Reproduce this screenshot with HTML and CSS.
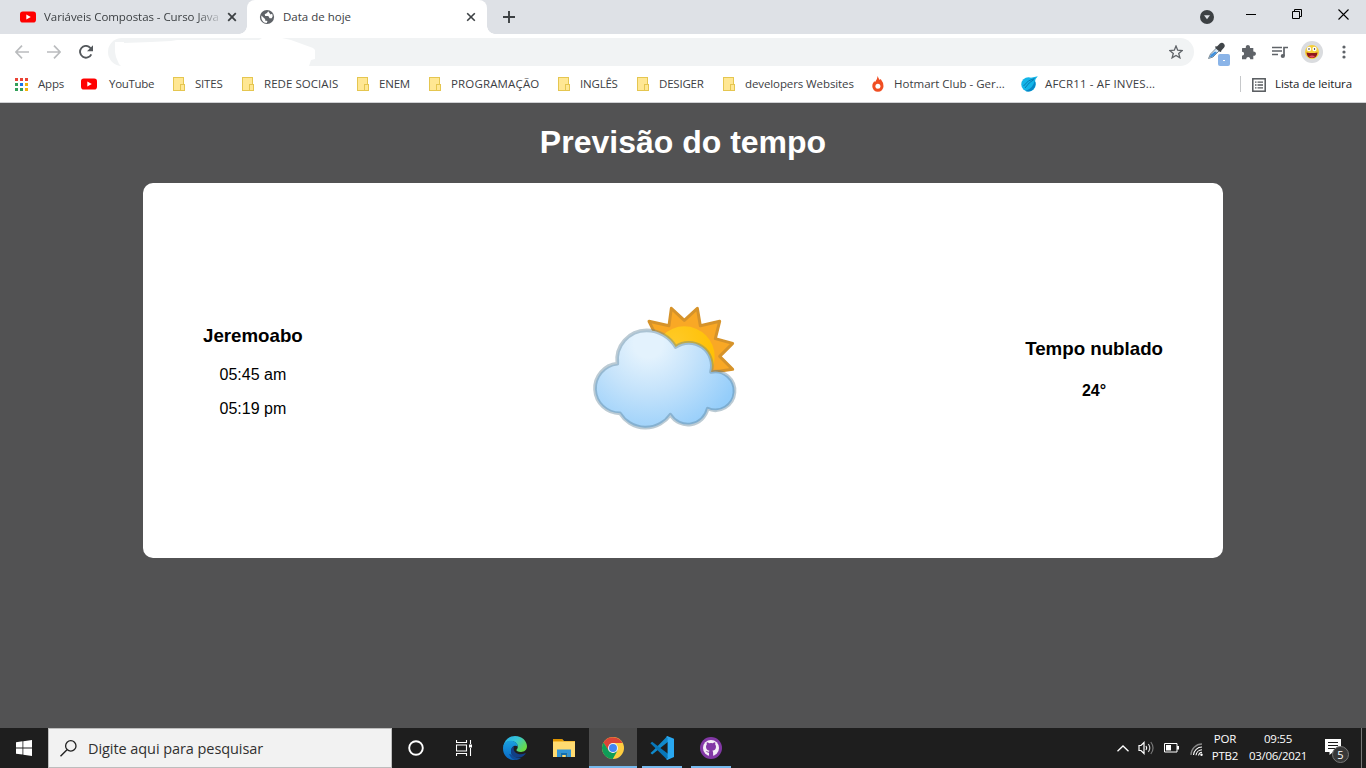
FILE: index.html
```html
<!DOCTYPE html>
<html lang="pt-BR">
<head>
<meta charset="utf-8">
<title>Data de hoje</title>
<link rel="stylesheet" href="styles.css">
</head>
<body>
<div class="screen">
  <header class="tabstrip">
    <div class="tab">
      <svg class="tab-icon" width="16" height="16" viewBox="0 0 16 16"><rect y="2.4" width="16" height="11.2" rx="2.8" fill="#f00"/><path d="M6.3 5.5v5L10.8 8z" fill="#fff"/></svg>
      <span class="tab-title faded">Variáveis Compostas - Curso Java</span>
      <svg class="tab-close" width="10" height="10" viewBox="0 0 10 10"><path d="M1.2 1.2l7.6 7.6M8.8 1.2L1.2 8.8" stroke="#3c4043" stroke-width="1.8"/></svg>
    </div>
    <div class="tab active">
      <svg class="tab-icon" width="16" height="16" viewBox="0 0 16 16"><circle cx="8" cy="8" r="7.1" fill="#5f6368"/><path d="M9.2 2.2 8 4 5.700 5.200 6.200 7H9.300L10.600 9.200H12.700L13.700 7.200 13.200 4.800 11.500 5.500 10.300 3.800ZM2.400 6.500 6.300 10.200 6 11.500 8.500 12.100 7.700 13.900C4.500 14.100 1.700 11.100 2.400 6.500Z" fill="#fff"/></svg>
      <span class="tab-title">Data de hoje</span>
      <svg class="tab-close" width="10" height="10" viewBox="0 0 10 10"><path d="M1.200 1.200l7.600 7.600M8.800 1.200L1.200 8.800" stroke="#3c4043" stroke-width="1.600"/></svg>
    </div>
    <svg class="new-tab" width="12" height="12" viewBox="0 0 12 12"><path d="M6 0v12M0 6h12" stroke="#3c4043" stroke-width="1.900"/></svg>
    <div class="window-controls">
      <svg width="14" height="14" viewBox="0 0 14 14" class="tab-search"><circle cx="7" cy="7" r="7" fill="#3c4043"/><path d="M4 5.300h6L7 9.200z" fill="#dee1e6"/></svg>
      <svg width="10" height="11" viewBox="0 0 10 11" class="min"><path d="M0 5.500h10" stroke="#000"/></svg>
      <svg width="10" height="10" viewBox="0 0 10 10" class="max"><path d="M.5 2.500h7v7h-7zM2.500 2.500v-2h7v7h-2" fill="none" stroke="#000"/></svg>
      <svg width="11" height="11" viewBox="0 0 11 11"><path d="M.5.500l10 10M10.500.500l-10 10" stroke="#000" stroke-width="1.100"/></svg>
    </div>
  </header>

  <nav class="toolbar">
    <div class="nav-buttons">
      <svg width="14" height="14" viewBox="0 0 14 14"><path d="M14 7H1M7 .7L.9 7 7 13.300" fill="none" stroke="#babcbe" stroke-width="1.700"/></svg>
      <svg width="14" height="14" viewBox="0 0 14 14"><path d="M0 7h13M7 .7L13.100 7 7 13.300" fill="none" stroke="#babcbe" stroke-width="1.700"/></svg>
      <svg width="14" height="14" viewBox="0 0 14 14"><path d="M12.300 9.300A5.900 5.900 0 1 1 11.300 2.800L12.300 3.800" fill="none" stroke="#54585c" stroke-width="1.900"/><path d="M14 .2v6H8z" fill="#54585c"/></svg>
    </div>
    <div class="omnibox">
      <svg class="blank-mark" width="202" height="28" viewBox="0 0 202 28"><path d="M1 4H10V5L37 4 57 3 63 2H145L148 0H168L177 2 188 6 199 10 201 12V21L197 22 195 28H7L5 26 2 19 1 14Z" fill="#fff"/></svg>
      <svg width="14" height="14" viewBox="0 0 14 14" class="star"><path d="M7 1l1.700 4.200 4.500.3-3.500 2.900 1.200 4.400L7 10.400l-3.900 2.400 1.200-4.400L.8 5.500l4.500-.3z" fill="none" stroke="#5f6368" stroke-width="1.300"/></svg>
    </div>
    <div class="extensions">
      <svg width="23" height="24" viewBox="0 0 23 24"><path d="M1.500 16.500l2-4.500 6-6 3 2.500-6.500 6.500z" fill="#d5e6f4" stroke="#7c8a94" stroke-width="1"/><path d="M2.500 15.500l1.500-3 4-3 2 1-4 4z" fill="#3f8fdc"/><path d="M8.500 4.500l5.500 5M9.500 6l3.500-3.500q2-1.500 3.300-.2t0 3L13 8.800z" stroke="#41464a" stroke-width="1.600" fill="#41464a"/><rect x="11" y="12" width="12" height="12" rx="2" fill="#8ab4e8"/><path d="M16 18.500h2" stroke="#fff"/></svg>
      <svg width="15" height="15" viewBox="0 0 15 15"><path d="M1.500 3h3.300c-.6-3.900 4.700-3.900 4.200 0h3.300v3.600c3.500-.2 3.500 4.400 0 4.200v3.500H9.200c0-3-4-3-4 0H1v-3.800c2.800 0 2.800-3.700 0-3.700V3.500z" fill="#5f6368"/></svg>
      <svg width="16" height="13" viewBox="0 0 16 13"><path d="M0 1.500h10M0 5h10M0 8.500h6M12 10V1.500h4" fill="none" stroke="#5f6368" stroke-width="1.700"/><circle cx="10.800" cy="10" r="2.100" fill="#5f6368"/></svg>
      <svg width="22" height="22" viewBox="0 0 22 22"><circle cx="11" cy="11" r="11" fill="#dadcdf"/><circle cx="11" cy="11" r="7" fill="#f6cf38"/><circle cx="8" cy="8" r="2.200" fill="#fff"/><circle cx="13.500" cy="8" r="2.200" fill="#fff"/><circle cx="8" cy="8" r=".7"/><circle cx="13.500" cy="8" r=".7"/><path d="M5.500 11.500q5.500 1 11 0Q16 17 11 17T5.500 11.500z" fill="#8e171b"/><path d="M8 15.500q3-2 6 0-3 2.300-6 0z" fill="#ec4c63"/></svg>
      <svg width="4" height="14" viewBox="0 0 4 14" fill="#5f6368"><circle cx="2" cy="2" r="1.600"/><circle cx="2" cy="7" r="1.600"/><circle cx="2" cy="12" r="1.600"/></svg>
    </div>
  </nav>

  <nav class="bookmarks">
    <div class="bm apps"><svg width="13" height="13" viewBox="0 0 13 13"><path d="M0 0h3v3H0zM5 0h3v3H5zM10 0h3v3h-3z" fill="#ea4335"/><path d="M0 5h3v3H0zM0 10h3v3H0zM5 10h3v3H5z" fill="#34a05a"/><path d="M5 5h3v3H5z" fill="#1a73e8"/><path d="M10 5h3v3h-3zM10 10h3v3h-3z" fill="#f5b30a"/></svg><span>Apps</span></div>
    <div class="bm yt"><svg width="16" height="16" viewBox="0 0 16 16"><rect y="2.400" width="16" height="11.200" rx="2.800" fill="#f00"/><path d="M6.300 5.500v5L10.800 8z" fill="#fff"/></svg><span>YouTube</span></div>
    <div class="bm"><i class="folder"></i><span>SITES</span></div>
    <div class="bm rede"><i class="folder"></i><span>REDE SOCIAIS</span></div>
    <div class="bm"><i class="folder"></i><span>ENEM</span></div>
    <div class="bm prog"><i class="folder"></i><span>PROGRAMAÇÃO</span></div>
    <div class="bm"><i class="folder"></i><span>INGLÊS</span></div>
    <div class="bm"><i class="folder"></i><span>DESIGER</span></div>
    <div class="bm dev"><i class="folder"></i><span>developers Websites</span></div>
    <div class="bm hot"><svg width="12" height="16" viewBox="0 0 12 16"><path d="M5.700 0q.7 2.500 2 4l1-1Q11.500 6.500 11.500 10.200A5.600 5.600 0 0 1 .3 10.200Q.3 7.500 2.200 5.200l.9.900Q5.200 3.800 5.700 0z" fill="#f04e23"/><circle cx="5.900" cy="10.200" r="2.500" fill="#fff"/></svg><span>Hotmart Club - Ger...</span></div>
    <div class="bm af"><svg width="17" height="16" viewBox="0 0 17 16"><circle cx="7.500" cy="8.400" r="7.200" fill="#13b5e8"/><path d="M10 1.800L16.800.3Q14 3 13.800 6z" fill="#13b5e8"/><path d="M13.800 4.500q2.300 5.500-2.300 9.500-3.500 2.500-7 1Q12 12.500 13.800 4.500z" fill="#0786c5"/><path d="M2.500 10q4.500-6.500 11-7.500M4 12q4-6 9-8.500" fill="none" stroke="#0873aa" stroke-width=".9"/></svg><span>AFCR11 - AF INVES...</span></div>
    <div class="bm reading"><svg width="14" height="14" viewBox="0 0 14 14"><rect x=".8" y=".8" width="12.400" height="12.400" fill="none" stroke="#54585c" stroke-width="1.500"/><path d="M3 4.200h1.500M3 7h1.500M3 9.800h1.500M5.500 4.200H11M5.500 7H11M5.500 9.800H11" stroke="#54585c" stroke-width="1.300"/></svg><span>Lista de leitura</span></div>
  </nav>

  <main class="page">
    <h1>Previsão do tempo</h1>
    <section class="card">
      <div class="place"><h3>Jeremoabo</h3><p>05:45 am</p><p>05:19 pm</p></div>
      <svg class="weather" width="170" height="145" viewBox="0 0 510 435">
        <defs>
          <radialGradient id="sun" gradientUnits="userSpaceOnUse" cx="283" cy="142" r="110"><stop offset="0" stop-color="#ffca28"/><stop offset="1" stop-color="#ffc107"/></radialGradient>
          <radialGradient id="cloud" gradientUnits="userSpaceOnUse" cx="205" cy="145" r="290"><stop offset=".15" stop-color="#e3f2fd"/><stop offset=".5" stop-color="#c5e3fb"/><stop offset="1" stop-color="#94cdfa"/></radialGradient>
        </defs>
        <path d="M207 79L267 92 274 40 313 76 352 40 361 92 419 79 406 131 458 145 419 184 458 223 395 232 240 145Z" fill="#f9a825"/>
        <circle cx="313" cy="185" r="91" fill="url(#sun)"/>
        <path d="M240 145L207 79 267 92 274 40 313 76 352 40 361 92 419 79 406 131 458 145 419 184 458 223 395 232" fill="none" stroke="#d6932a" stroke-width="9" stroke-linejoin="round"/>
        <path d="M112 206A88.500 88.500 0 0 1 200 106A100.700 100.700 0 0 1 287 156A69 69 0 0 1 393 231A58 58 0 1 1 383 341A61 61 0 0 1 271 359A90 90 0 0 1 120 355A74.700 74.700 0 0 1 112 206Z" fill="url(#cloud)"/>
        <path d="M112 206A88.500 88.500 0 0 1 200 106A100.700 100.700 0 0 1 287 156A69 69 0 0 1 393 231A58 58 0 1 1 383 341A61 61 0 0 1 271 359A90 90 0 0 1 120 355A74.700 74.700 0 0 1 112 206Z" fill="none" stroke="#587c94" stroke-opacity=".4" stroke-width="11" stroke-linejoin="round"/>
      </svg>
      <div class="status"><h3>Tempo nublado</h3><strong>24°</strong></div>
    </section>
  </main>

  <footer class="taskbar">
    <div class="start"><svg width="16" height="16" viewBox="0 0 16 16" fill="#fff"><path d="M0 2.300L6.500 1.300V7.500H0zM7.300 1.200L16 0V7.500H7.300zM0 8.400H6.500V14.600L0 13.700zM7.300 8.400H16V16L7.300 14.700z"/></svg></div>
    <div class="search"><svg width="17" height="17" viewBox="0 0 17 17"><circle cx="10.800" cy="5.900" r="5.200" fill="none" stroke="#222" stroke-width="1.300"/><path d="M7 9.700L.5 16.200" stroke="#222" stroke-width="1.400"/></svg><span>Digite aqui para pesquisar</span></div>
    <div class="task-icons">
      <div class="task"><svg width="16" height="16" viewBox="0 0 16 16"><circle cx="8" cy="8" r="6.800" fill="none" stroke="#fff" stroke-width="1.900"/></svg></div>
      <div class="task"><svg width="17" height="16" viewBox="0 0 17 16"><path d="M.5 0v2.500h10V0M.5 16v-2.500h10V16M.5 5h10v6H.500zM14.500 0v4M14.500 8v8" fill="none" stroke="#fff" stroke-width="1.100"/><rect x="13" y="4.500" width="3" height="3" fill="#fff"/></svg></div>
      <div class="task edge"><svg width="24" height="24" viewBox="0 0 24 24"><defs><linearGradient id="e1" x1="0" y1="0" x2="1" y2=".6"><stop offset="0" stop-color="#26a9e8"/><stop offset=".5" stop-color="#36c5d8"/><stop offset="1" stop-color="#68db45"/></linearGradient><linearGradient id="e2" x1="0" y1="0" x2="0" y2="1"><stop offset="0" stop-color="#1aa0e0"/><stop offset="1" stop-color="#0967c3"/></linearGradient></defs><path d="M.3 10.500C1.500 3.500 6.500 0 12 0c7.500 0 12 5.500 12 10.300 0 3.700-3 5.700-6 5.700-3.200 0-4.600-1-4.600-1.900 0-.8 1.400-1.300 1.400-3.400C14.800 7.500 11.500 4.500 7 5 3.500 5.500 1 8 .3 10.500z" fill="url(#e1)"/><path d="M.1 11C.5 7 4 4.800 7.500 4.800c4.200 0 7.300 2.700 7.300 5.800C12 8.500 8.500 10.500 8.200 14.500 8 19 11 22.500 15 23.500 7 26-.8 20 .1 11z" fill="url(#e2)"/><path d="M11.500 9.500C8.500 11 7 14.500 8.700 18c2.300 5 9.300 5.200 13.800 0 .5-.6 0-1-.6-.7-5.500 2.600-11.900-.5-11.200-5.600.1-.9.400-1.600.8-2.200z" fill="#123f86"/><path d="M9 18.500q3.500 4.500 9.500 3.200-3 2.300-6.500 2.200Q8 23 6 18z" fill="#104a96"/></svg></div>
      <div class="task"><svg width="22" height="19" viewBox="0 0 22 19"><path d="M0 0h9l2 2H22v16H0z" fill="#f4bd3b"/><path d="M0 0h9l1 2H0z" fill="#df9400"/><path d="M0 3h22v15H0z" fill="#ffdb71"/><path d="M4 10.500h14V18H14.500V14h-7v4H4z" fill="#3295d7"/><path d="M7.500 14h7v4h-2v-2h-3v2h-2z" fill="#126fb0"/><path d="M9.500 16h3v2h-3z" fill="#ffdb71"/></svg></div>
      <div class="task current"><svg width="22" height="22" viewBox="0 0 48 48"><circle cx="24" cy="24" r="24" fill="#ffcd40"/><path d="M24 13H44.800A24 24 0 0 0 3.200 12L14 30z" fill="#db4437"/><path d="M3.200 12A24 24 0 0 0 23.500 48L34 29.500 24 35 14.500 29.500z" fill="#0f9d58"/><circle cx="24" cy="24" r="11" fill="#f1f1f1"/><circle cx="24" cy="24" r="8.700" fill="#4285f4"/></svg></div>
      <div class="task open"><svg width="24" height="24" viewBox="0 0 24 24"><path d="M17.200.3L3.300 14.500.500 17.100 2.200 18.600 19 5z" fill="#118acb"/><path d="M2.100 5.700L.4 7.300 17 23.500l2-5z" fill="#0877b9"/><path d="M17.200 0L24 2.800v18.300L17.200 24l-1-1 1.400-1V2l-1.400-1z" fill="#29a8f1"/></svg></div>
      <div class="task open"><svg width="22" height="22" viewBox="0 0 22 22"><circle cx="11" cy="11" r="11" fill="#8238a5"/><circle cx="11" cy="11" r="8" fill="#f4eff6"/><path d="M9 19v-3.200c-2.200 0-2.200-1.400-3.300-1.700 1.700-.4 1.900 1 3.300.7.100-.6.300-.9.600-1.100C7.200 13.300 6 12.300 6 9.800c0-.9.300-1.600.8-2.200-.2-.6-.2-1.500.1-2.300.8 0 1.600.5 2.200.9a8 8 0 0 1 3.800 0c.7-.4 1.400-.9 2.200-.9.300.8.300 1.700.1 2.300.5.600.8 1.300.8 2.200 0 2.500-1.200 3.500-3.600 3.900.4.300.7.900.7 1.800V19z" fill="#8238a5"/></svg></div>
    </div>
    <div class="tray">
      <svg width="12" height="7" viewBox="0 0 12 7"><path d="M.5 6.300L6 1l5.500 5.300" fill="none" stroke="#fff" stroke-width="1.300"/></svg>
      <svg width="17" height="14" viewBox="0 0 17 14" fill="none"><path d="M1 4.500h2L6 1.500v11l-3-3H1zM8 5q1.500 2 0 4" stroke="#fff" stroke-width="1.200"/><path d="M10.300 3q3 4 0 8" stroke="#ccc" stroke-width="1.200"/><path d="M12.800 1q4.500 6 0 12" stroke="#777" stroke-width="1.200"/></svg>
      <svg width="15" height="10" viewBox="0 0 15 10"><path d="M.5.500h12.500v8.500H.500z" fill="none" stroke="#fff"/><path d="M2 2h5v5.500H2zM13 3h2v3.500h-2z" fill="#fff"/></svg>
      <svg class="wifi" width="13" height="13" viewBox="0 0 13 13" fill="none"><path d="M1 12A11 11 0 0 1 12 1" stroke="#858585" stroke-width="1.300"/><path d="M3.500 12A8.500 8.500 0 0 1 12 4M6 12.300A6.300 6.300 0 0 1 12 6.800M8.500 12.500A4 4 0 0 1 12 9.300" stroke="#fff" stroke-width="1.100"/><circle cx="11.500" cy="11.800" r="1.200" fill="#fff"/></svg>
      <div class="lang"><span>POR</span><span>PTB2</span></div>
      <div class="clock"><span>09:55</span><span>03/06/2021</span></div>
      <div class="notice"><svg width="16" height="16" viewBox="0 0 16 16"><path d="M0 0h16v13H8l-3.500 3v-3H0z" fill="#fff"/><path d="M3 3.500h10M3 6.500h10M3 9.500h7" stroke="#1e1e1e"/></svg><b>5</b></div>
      <div class="show-desktop"></div>
    </div>
  </footer>
</div>
</body>
</html>
```
FILE: styles.css
```css
* { box-sizing: border-box; }
body { margin: 0; background: #525253; }
svg { display: block; flex: none; }
.screen { width: 1366px; height: 768px; display: flex; flex-direction: column; overflow: hidden; font-family: "Open Sans", sans-serif; font-size: 11.5px; color: #3c4043; white-space: nowrap; }

.tabstrip { height: 34px; flex: none; display: flex; background: #dee1e6; }
.tab { height: 34px; display: flex; align-items: center; width: 247px; padding-left: 20px; position: relative; }
.tab.active { width: 240px; padding-left: 12px; background: #fff; border-radius: 8px 8px 0 0; }
.tab.active::before, .tab.active::after { content: ""; position: absolute; bottom: 0; width: 8px; height: 8px; }
.tab.active::before { left: -8px; background: radial-gradient(circle at 0 0, transparent 7.5px, #fff 8px); }
.tab.active::after { right: -8px; background: radial-gradient(circle at 100% 0, transparent 7.5px, #fff 8px); }
.tab-icon { margin-right: 8px; }
.tab-title { width: 175px; padding-bottom: 2px; }
.tab.active .tab-title { width: 178px; }
.tab-title.faded { letter-spacing: -.06px; -webkit-mask-image: linear-gradient(90deg, #000 152px, transparent 180px); mask-image: linear-gradient(90deg, #000 152px, transparent 180px); }
.tab-close { margin-left: 8px; }
.tab.active .tab-close { margin-left: 5px; }
.new-tab { margin: 11px 0 0 16px; }
.window-controls { display: flex; align-items: flex-start; margin-left: auto; padding: 9px 17px 0 0; }
.tab-search { margin: 1px 32px 0 0; }
.min { margin-right: 36px; }
.max { margin-right: 36px; }

.toolbar { height: 36px; flex: none; background: #fff; display: flex; align-items: center; }
.nav-buttons { display: flex; gap: 18px; padding-left: 15px; width: 108px; }
.omnibox { width: 1086px; height: 28px; border-radius: 14px; background: #f1f3f4; display: flex; align-items: center; justify-content: space-between; padding: 0 11px 0 6px; }
.extensions { display: flex; align-items: center; margin-left: 13px; }
.extensions svg:nth-child(1) { margin: 4px 11px 0 0; }
.extensions svg:nth-child(2) { margin-right: 16px; }
.extensions svg:nth-child(3) { margin-right: 13px; }
.extensions svg:nth-child(4) { margin-right: 19px; }

.bookmarks { height: 33px; flex: none; background: #fff; border-bottom: 1px solid #d0d1d4; padding: 0 0 4px 15px; display: grid; grid-template-columns: 66px 92px 69px 115px 72px 129px 79px 86px 149px 149px 219px 126px; align-items: center; }
.bm { display: grid; grid-template-columns: 22px auto; align-items: center; justify-content: start; letter-spacing: -.2px; }
.bm span { padding-bottom: 2px; }
.bm.apps { grid-template-columns: 23px auto; }
.bm.yt { grid-template-columns: 28px auto; }
.bm.yt span { letter-spacing: -.3px; }
.bm.rede { letter-spacing: .05px; }
.bm.prog { letter-spacing: .15px; }
.bm.dev { letter-spacing: -.1px; }
.bm.hot { letter-spacing: 0; }
.bm.af { grid-template-columns: 24px auto; letter-spacing: .16px; }
.bm.reading { grid-template-columns: 23px auto; border-left: 1px solid #c6c8ca; padding-left: 11px; color: #202124; height: 16px; letter-spacing: -.12px; }
.folder { width: 11px; height: 14px; background: #ffe793; border: 1px solid #e5c650; position: relative; }
.folder::after { content: ""; position: absolute; right: -2px; bottom: -1px; width: 3px; height: 5px; border: 1px solid #e5c650; background: #ffe793; }

.page { height: 625px; flex: none; padding-top: 21px; font-family: "Liberation Sans", Arial, sans-serif; color: #000; font-size: 16px; }
h1 { margin: 0 0 22px; font-size: 32px; line-height: 37px; color: #fff; text-align: center; }
.card { width: 1080px; height: 375px; margin: 0 auto; background: #fff; border-radius: 10px; padding: 0 60px; display: flex; align-items: center; justify-content: space-between; }
h3 { margin: 0; font-size: 18.72px; line-height: 22px; }
.place, .status { text-align: center; }
.place { padding-top: 2px; }
.status { padding-bottom: 4px; }
.place p { margin: 16px 0 0; line-height: 18px; }
.place h3 { margin-bottom: 19px; }
.status h3 { margin-bottom: 22px; }
.status strong { display: block; line-height: 18px; }
.weather { margin: 0 0 6px 2px; }

.taskbar { height: 40px; flex: none; background: #1e1e1e; display: flex; color: #fff; }
.start { width: 48px; display: grid; place-items: center; }
.search { width: 344px; background: #f2f2f2; border: 1px solid #bdbdbd; display: flex; align-items: center; gap: 11px; padding-left: 11px; color: #303030; font-size: 14.5px; letter-spacing: -.07px; }
.task-icons { display: flex; gap: 1px; }
.task { width: 48px; height: 40px; display: grid; place-items: center; position: relative; }
.task:nth-child(2) { margin-left: -1px; }
.edge { margin-left: 2px; }
.current { background: #4c4c4c; border-bottom: 2px solid #76b9ed; padding-top: 2px; }
.open::after { content: ""; position: absolute; left: 4px; right: 4px; bottom: 0; height: 2px; background: #76b9ed; }
.tray { display: flex; align-items: center; margin-left: auto; }
.tray > svg:nth-child(1) { margin-right: 9px; }
.tray > svg:nth-child(2) { margin-right: 9px; }
.tray > svg:nth-child(3) { margin-right: 11px; }
.wifi { margin: 3px 7px 0 0; }
.lang, .clock { display: flex; flex-direction: column; align-items: center; line-height: 17px; padding-bottom: 3px; }
.lang { width: 30px; margin-right: 8px; letter-spacing: -.2px; }
.clock { width: 60px; margin-right: 17px; letter-spacing: -.3px; }
.notice { width: 24px; height: 24px; margin: 6px 12px 0 0; position: relative; }
.notice b { position: absolute; right: 0; bottom: 0; width: 17px; height: 17px; border-radius: 50%; border: 1px solid #777; background: #383838; font-size: 11px; line-height: 15px; text-align: center; font-weight: 400; }
.show-desktop { width: 5px; height: 40px; border-left: 1px solid #777; }
```
